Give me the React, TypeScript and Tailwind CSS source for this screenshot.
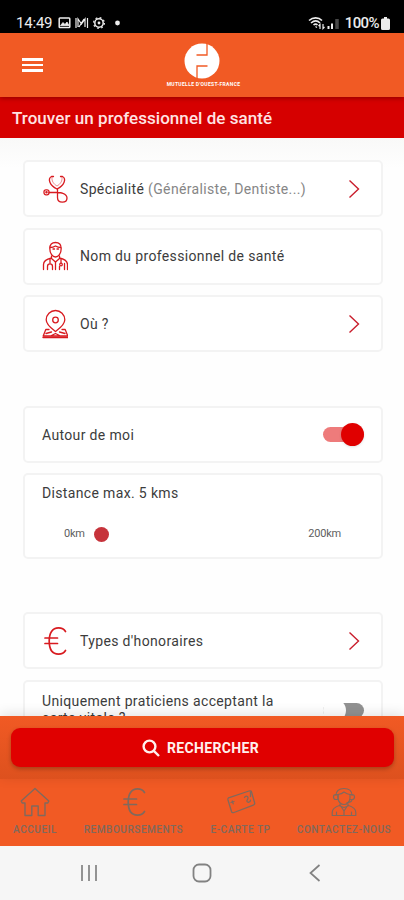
import React, { useState } from 'react';
import { clsx } from 'clsx';

interface IconProps {
  className?: string;
}

const StethoscopeIcon: React.FC<IconProps> = ({ className }) => (
  <svg viewBox="0 0 26 30" className={className} fill="none" stroke="currentColor" strokeWidth="1.300" strokeLinecap="round" strokeLinejoin="round">
    <path d="M11.500 2.500H9.500C7.500 3.500 7 6 8 8.500c1 2.500 3.500 4.800 7 6.500 3.500-1.700 6-4 7-6.500 1-2.500.5-5-1.500-6H18.500" />
    <path d="M10 3.500c-.5 3.500 1.500 6.500 5 8.500 3.500-2 5.500-5 5-8.500" strokeWidth=".5" />
    <path d="M15.500 15v8.500c0 3 2 4.700 4.800 4.700s4.700-1.700 4.700-4.200-1.700-3.600-4-4.600c-1.500-.7-3-.9-5-.9H7" />
    <rect x="2" y="15.800" width="5" height="5" rx="2" />
    <circle cx="4.500" cy="18.300" r=".6" />
  </svg>
);

const DoctorIcon: React.FC<IconProps> = ({ className }) => (
  <svg viewBox="0 0 26 30" className={className} fill="none" stroke="currentColor" strokeWidth="1.300" strokeLinecap="round" strokeLinejoin="round">
    <path d="M7.800 7.500c0-4 2-6 5.700-6s5.700 2 5.700 6c0 4.500-2.500 8.500-5.700 8.500s-5.700-4-5.700-8.500z" />
    <path d="M8.300 6.500c2 0 3.700-.6 5.200-1.500 1.500.9 3.200 1.500 5.200 1.500M11 8h1.500M15 8h1.500" />
    <path d="M9.500 15v2.500l4 3.500 4-3.500V15M9.500 17C5 18 1.500 19.500 1.500 23.500v5M17.500 17c4.500 1 8 2.500 8 6.500v5" />
    <path d="M8 18v4M5.500 28.500v-3c0-3.500 5-3.500 5 0v3M19 18v4M13.500 21v7.500M17.500 28.500v-3M22.500 22.500v6" />
    <circle cx="19" cy="23.500" r="1.300" />
  </svg>
);

const MapPinIcon: React.FC<IconProps> = ({ className }) => (
  <svg viewBox="0 0 26 30" className={className} fill="none" stroke="currentColor" strokeWidth="1.300" strokeLinecap="round" strokeLinejoin="round">
    <path d="M13.500 22.500C9.500 19.500 4.200 16 4.200 10.800a9.300 9.300 0 0 1 18.600 0c0 5.200-5.300 8.700-9.300 11.700z" />
    <circle cx="13.500" cy="11" r="2.800" />
    <path d="M7 20.500H3.800L1.200 27h24.600l-2.600-6.500H20M4 24.500l5.500-1.500M23 24.500 17.500 23M8.500 27l5-2.500 5 2.500" />
    <path d="M1.200 28.300h24.600" strokeWidth="1.800" />
  </svg>
);

const EuroIcon: React.FC<IconProps> = ({ className }) => (
  <svg viewBox="0 0 24 30" className={className} fill="none" stroke="currentColor" strokeWidth="1.700" strokeLinecap="round">
    <path d="M22.500 5.500C21 3 18.500 1.900 15.500 1.900 9.300 1.900 6.200 7 6.200 15s3.100 13.100 9.300 13.100c3 0 5.500-1.100 7-3.600M2 12h12.500M2 17.500h12.500" />
  </svg>
);

const HouseIcon: React.FC<IconProps> = ({ className }) => (
  <svg viewBox="0 0 30 30" className={className} fill="none" stroke="currentColor" strokeWidth="1.400" strokeLinejoin="round">
    <path d="M15 1.500 1.200 14l1 2H5v12.500h6.800V19h6.400v9.500H25V16h2.800l1-2z" />
  </svg>
);

const CardIcon: React.FC<IconProps> = ({ className }) => (
  <svg viewBox="0 0 30 26" className={className} fill="none" stroke="currentColor" strokeWidth="1.300" strokeLinejoin="round" strokeLinecap="round">
    <path d="M2.500 8.800 23 2q2-.7 2.600 1.200l3 10.500q.5 1.700-1.300 2.400L8 23.500q-2 .7-2.500-1L2 11q-.4-1.600.5-2.200z" />
    <path d="M18.500 8.500c.8-1.800 3-1.800 3.500 0s-1.800 2.500-1 4 3.500.5 3.500-1.300M5 13.500l3-1M6.200 12l1 2.800M24.500 3v4.500" />
  </svg>
);

const SupportIcon: React.FC<IconProps> = ({ className }) => (
  <svg viewBox="0 0 26 30" className={className} fill="none" stroke="currentColor" strokeWidth="1.200" strokeLinejoin="round" strokeLinecap="round">
    <path d="M5 8.500C5 4 8 1.500 13 1.500s8 2.500 8 7M7 7.500c3-.3 5-1.500 6-2.500 1.500 1 3.500 2.200 6 2.500V11c0 4-3 6.500-6 6.500S7 15 7 11z" />
    <path d="M7 7.500H5c-2 0-2.500 1-2.500 2.500S3 12.500 5 12.500h2zM19 7.500h2c2 0 2.500 1 2.500 2.500s-.5 2.500-2.500 2.500h-2M21 12.500c0 2-2 3-5 3" />
    <path d="M9 17v1.300C5 19.500 1.200 21 1.200 25.500v3h23.600v-3c0-4.500-3.800-6-7.800-7.200V17M9 18l4 6 4-6M9 19l4 1.500 4-1.500M13 24v4M5.500 28v-3M20.500 28v-3" />
  </svg>
);

const Chevron: React.FC = () => (
  <svg viewBox="0 0 12 20" className="w-3 h-5 text-[#c91d2c]" fill="none" stroke="currentColor" strokeWidth="1.400">
    <path d="m1.500 1.500 9 8.500-9 8.500" />
  </svg>
);

const StatusBar: React.FC = () => (
  <div className="h-[33px] shrink-0 bg-black text-[#ededed] flex items-center pl-4 pr-3.5 pt-[13px]">
    <span className="text-[15px] leading-4 tracking-[-0.200px] w-[42px]">14:49</span>
    <svg viewBox="0 0 64 14" className="w-16 h-3.5" fill="none" stroke="currentColor" strokeWidth="1.500">
      <rect x="1.200" y="2" width="10.600" height="9.500" rx=".8" />
      <path d="m2.500 9.500 2.500-3 2 2 2-2.500 2 3.500z" fill="currentColor" strokeWidth=".8" />
      <path d="M18 2v10M29.500 2v10M20 11V3l3.500 5L27 3v8M21 11l5-8" strokeWidth="1.200" />
      <circle cx="41" cy="7" r="4.200" />
      <circle cx="41" cy="7" r="5.400" strokeWidth="1.200" strokeDasharray="1.800 2.440" />
      <circle cx="41" cy="7" r="1.400" fill="currentColor" stroke="none" />
      <circle cx="59.500" cy="7" r="2.400" fill="currentColor" stroke="none" />
    </svg>
    <div className="flex-1" />
    <svg viewBox="0 0 32 14" className="w-8 h-3.5 mr-[5px]" fill="none" stroke="currentColor" strokeWidth="1.600">
      <path d="M1 4.500c4-3.500 9.500-3.500 13 0M3 7c3-2.500 6.500-2.500 9 0M5.500 9c1.200-1 3-1 4 0" />
      <path d="m7.500 10.500 1.500 1M12 13V8.500l-1.500 1.500M15 8v4.500L16.500 11" strokeWidth="1.200" />
      <path d="M20.500 13v-3M24 13V7.500" strokeWidth="2" />
      <path d="M29 13V3" stroke="#484848" strokeWidth="3.500" />
    </svg>
    <span className="text-[15px] leading-4 font-medium tracking-[-0.600px]">100%</span>
    <svg viewBox="0 0 9 13" className="w-[9px] h-[13px] ml-[2px]" fill="currentColor">
      <path d="M3 0h3v1.500h1.500Q9 1.500 9 3v8.500Q9 13 7.500 13h-6Q0 13 0 11.500V3q0-1.500 1.500-1.500H3z" />
    </svg>
  </div>
);

const Header: React.FC = () => (
  <header className="relative z-10 h-16 shrink-0 bg-[#f15a24] text-white grid grid-cols-[1fr_auto_1fr] shadow-[0_1px_5px_rgba(0,0,0,0.35)]">
    <button className="ml-[22px] mt-[25px] flex flex-col gap-[3px] h-4" aria-label="Menu">
      <span className="w-[21px] h-[2.500px] bg-white" />
      <span className="w-[21px] h-[2.500px] bg-white" />
      <span className="w-[21px] h-[2.500px] bg-white" />
    </button>
    <div className="flex flex-col items-center pt-2.5">
      <svg viewBox="0 0 36 36" className="w-9 h-9">
        <circle cx="18" cy="18" r="17.500" fill="#fff" />
        <path d="M23 0v12H12.500M23.500 23H13v13" fill="none" stroke="#f15a24" strokeWidth="1.300" />
      </svg>
      <span className="text-[5px] leading-[6px] mt-[2px] ml-[3px] font-bold tracking-[0.320px] whitespace-nowrap">MUTUELLE D'OUEST-FRANCE</span>
    </div>
  </header>
);

interface FieldProps {
  icon: React.ReactNode;
  label: string;
  hint?: string;
  arrow?: boolean;
}

const box = 'bg-white border-2 border-[#f3f3f3] rounded-[5px]';

const Field: React.FC<FieldProps> = ({ icon, label, hint, arrow }) => (
  <div className={clsx(box, 'h-[57px] flex items-center pl-[17px] pr-[21px]')}>
    <div className="w-[38px] text-[#d81b20]">{icon}</div>
    <div className="flex-1 text-sm tracking-[0.350px] text-[#3c3c3c] whitespace-nowrap">
      {label}
      {hint && <span className="text-[#868686]"> {hint}</span>}
    </div>
    {arrow && <Chevron />}
  </div>
);

const navItems = [
  { label: 'ACCUEIL', icon: <HouseIcon className="w-[30px] h-[30px]" />, width: 'w-[70px]' },
  { label: 'REMBOURSEMENTS', icon: <EuroIcon className="w-6 h-[30px]" />, width: 'w-[127px]' },
  { label: 'E-CARTE TP', icon: <CardIcon className="w-[30px] h-[26px]" />, width: 'w-[87px]' },
  { label: 'CONTACTEZ-NOUS', icon: <SupportIcon className="w-[26px] h-[30px]" />, width: 'w-[120px]' },
];

const App: React.FC = () => {
  const [around, setAround] = useState(true);

  return (
    <div className="w-[404px] h-[900px] flex flex-col overflow-hidden bg-[#fefefe] font-[Roboto,sans-serif]">
      <StatusBar />
      <Header />
      <div className="h-[41px] shrink-0 bg-[#d60000] flex items-center pl-3 pt-0.5 text-[17px] tracking-[0.050px] text-[#ffe3e3] font-medium whitespace-nowrap">
        Trouver un professionnel de santé
      </div>

      <main className="h-[578px] shrink-0 overflow-hidden bg-linear-to-b from-[#f9f9f8] to-[#fefefe] to-[30px] pt-[22px] pl-[23px] pr-[21px]">
        <div className="flex flex-col gap-[10.500px]">
          <Field icon={<StethoscopeIcon className="w-[26px] h-[30px]" />} label="Spécialité" hint="(Généraliste, Dentiste...)" arrow />
          <Field icon={<DoctorIcon className="w-[26px] h-[30px]" />} label="Nom du professionnel de santé" />
          <Field icon={<MapPinIcon className="w-[26px] h-[30px]" />} label="Où ?" arrow />
        </div>

        <div className={clsx(box, 'mt-[54px] h-[57px] flex items-center justify-between pl-[17px] pr-[17px]')}>
          <span className="text-sm tracking-[0.350px] text-[#3c3c3c]">Autour de moi</span>
          <button
            onClick={() => setAround(!around)}
            className={clsx('w-[41px] h-[15px] rounded-full flex items-center', around ? 'bg-[#ee7b7b] justify-end' : 'bg-gray-400')}
          >
            <span className={clsx('size-[23px] shrink-0 rounded-full shadow', around ? 'bg-[#e00000]' : 'bg-white')} />
          </button>
        </div>

        <div className={clsx(box, 'mt-2.5 h-[86px] pl-[17px] pt-2')}>
          <p className="text-sm leading-5 tracking-[0.350px] text-[#3c3c3c]">Distance max. 5 kms</p>
          <div className="mt-[23px] pl-[22px] pr-10 flex items-center text-[11px] leading-4 tracking-[-0.200px] text-[#606060]">
            <span>0km</span>
            <span className="size-[15px] ml-[9px] rounded-full bg-[#c6333b]" />
            <span className="ml-auto">200km</span>
          </div>
        </div>

        <div className="mt-[53px] flex flex-col gap-[11px]">
          <Field icon={<EuroIcon className="w-6 h-[30px] ml-px" />} label="Types d'honoraires" arrow />
          <div className={clsx(box, 'h-[57px] flex pl-[17px] pr-[17px] pt-[11px] justify-between')}>
            <p className="w-[250px] text-sm leading-[17px] tracking-[0.350px] text-[#3c3c3c]">
              Uniquement praticiens acceptant la carte vitale ?
            </p>
            <div className="w-[41px] h-[15px] mt-2.5 rounded-full bg-[#929292] flex items-center">
              <span className="size-[23px] shrink-0 rounded-full bg-white" />
            </div>
          </div>
        </div>
      </main>

      <div className="relative h-[63px] shrink-0 bg-linear-to-b from-[#f15a24] to-[#dd511e] pt-3 pl-[11px] pr-2.5 shadow-[0_-2px_12px_rgba(0,0,0,0.12)]">
        <button className="w-full h-[39px] bg-[#e00000] rounded-[9px] text-[#fff0ee] flex items-center justify-center gap-[7px] pr-1 shadow-[0_2px_4px_rgba(0,0,0,0.25)]">
          <svg viewBox="0 0 18 18" className="w-[18px] h-[18px]" fill="none" stroke="currentColor" strokeWidth="2.400">
            <circle cx="7.500" cy="7.500" r="5.900" />
            <path d="m11.800 11.800 5.200 5.200" />
          </svg>
          <span className="text-sm font-bold tracking-[0.350px]">RECHERCHER</span>
        </button>
      </div>

      <nav className="h-[67px] shrink-0 bg-[#f15a24] flex text-[#80695d]">
        {navItems.map((item) => (
          <div key={item.label} className={clsx(item.width, 'flex flex-col items-center pt-2')}>
            <div className="h-[30px] flex items-center">{item.icon}</div>
            <span className="mt-[7px] text-[10px] leading-3 font-medium tracking-[0.540px] whitespace-nowrap">{item.label}</span>
          </div>
        ))}
      </nav>

      <div className="h-[54px] shrink-0 bg-[#f6f6f6] grid grid-cols-[85px_1fr_85px] items-center text-[#828282]">
        <svg viewBox="0 0 18 18" className="w-[18px] h-[18px] ml-20" stroke="currentColor" strokeWidth="1.700">
          <path d="M2 1v16M9 1v16M16 1v16" />
        </svg>
        <svg viewBox="0 0 20 20" className="w-5 h-5 justify-self-center" fill="none" stroke="currentColor" strokeWidth="1.800">
          <rect x="1.500" y="1.500" width="17" height="17" rx="5.500" />
        </svg>
        <svg viewBox="0 0 12 18" className="w-3 h-[18px] -ml-[10px]" fill="none" stroke="currentColor" strokeWidth="1.700">
          <path d="M10.500 1 1.500 9l9 8" />
        </svg>
      </div>
    </div>
  );
};

export default App;
